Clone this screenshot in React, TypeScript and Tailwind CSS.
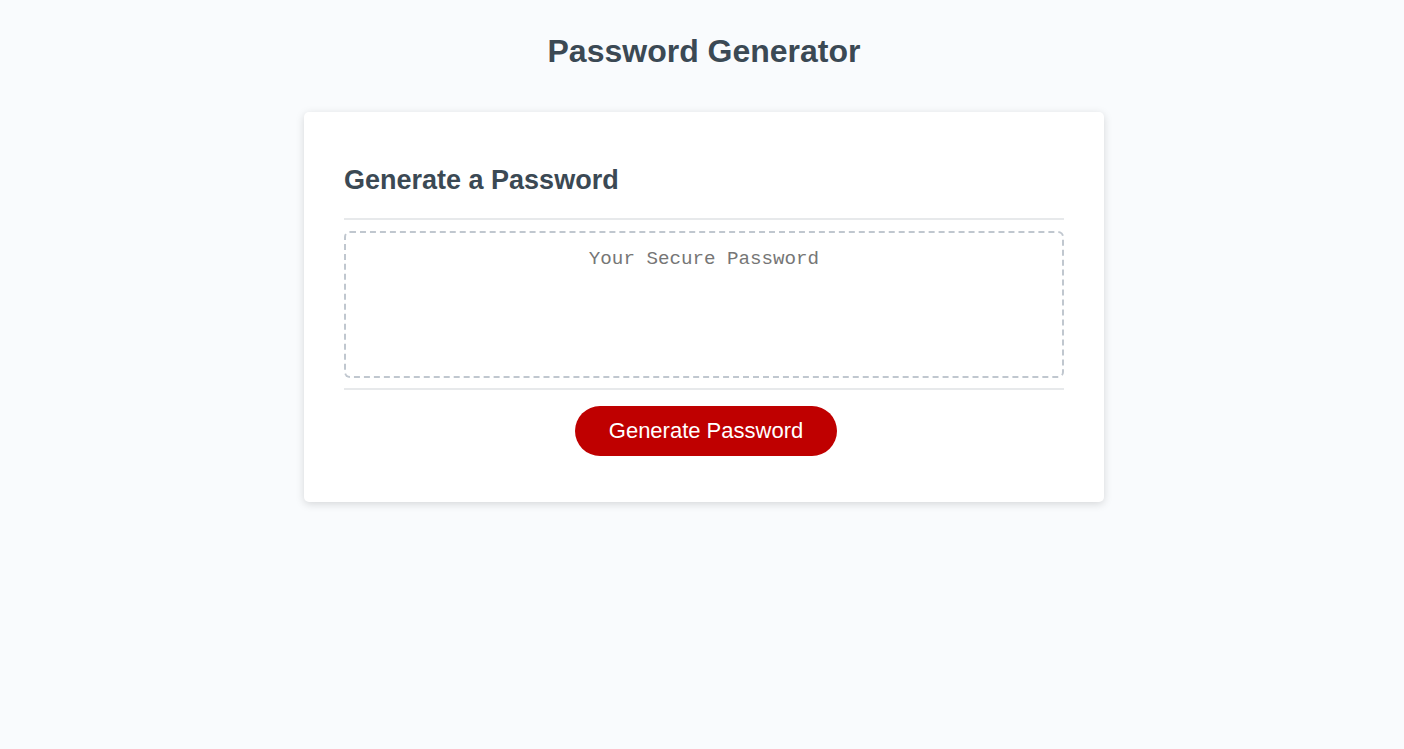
import React from "react";

export default function App() {
  return (
    <div
      className="min-h-[749px] w-full bg-[#f9fbfd] pt-[33px] pl-[24px] pr-[20px] text-[#3b4954]"
      style={{ fontFamily: '"Liberation Sans", Arial, sans-serif' }}
    >
      <header className="text-center">
        <h1 className="m-0 text-[32px] font-bold leading-[37px] text-[#3b4954]">
          Password Generator
        </h1>
      </header>
      <div className="mx-auto mt-[42px] max-w-[800px] rounded-[5px] bg-white px-[40px] pt-[30px] pb-[30px] text-[18px] shadow-[0_2px_8px_0_rgba(0,0,0,0.15)]">
        <div>
          <h2 className="mt-[23px] mb-[22px] text-[27px] font-bold leading-[31px]">
            Generate a Password
          </h2>
          <div className="h-[2px] w-full bg-[#e7e9eb]" />
        </div>
        <div className="min-h-[100px]">
          <textarea
            readOnly
            rows={2}
            placeholder="Your Secure Password"
            aria-label="Generated Password"
            className="mt-[11px] mb-[10px] block h-[147px] w-full resize-none overflow-hidden rounded-[6px] border-2 border-dashed border-[#c0c7cf] px-[15px] pt-[15px] pb-[85px] text-center text-[19.2px] leading-[22px] text-[#767676] outline-none placeholder:text-[#767676]"
            style={{ fontFamily: '"Liberation Mono", "Courier New", monospace' }}
          />
        </div>
        <div className="text-center">
          <div className="h-[2px] w-full bg-[#e7e9eb]" />
          <button
            type="button"
            className="mt-[16px] mr-[16px] mb-[16px] ml-[20px] inline-block cursor-pointer rounded-[25px] border-none bg-[#bf0000] px-[34px] py-[14px] text-center text-[22px] leading-[22px] text-white"
          >
            Generate Password
          </button>
        </div>
      </div>
    </div>
  );
}
